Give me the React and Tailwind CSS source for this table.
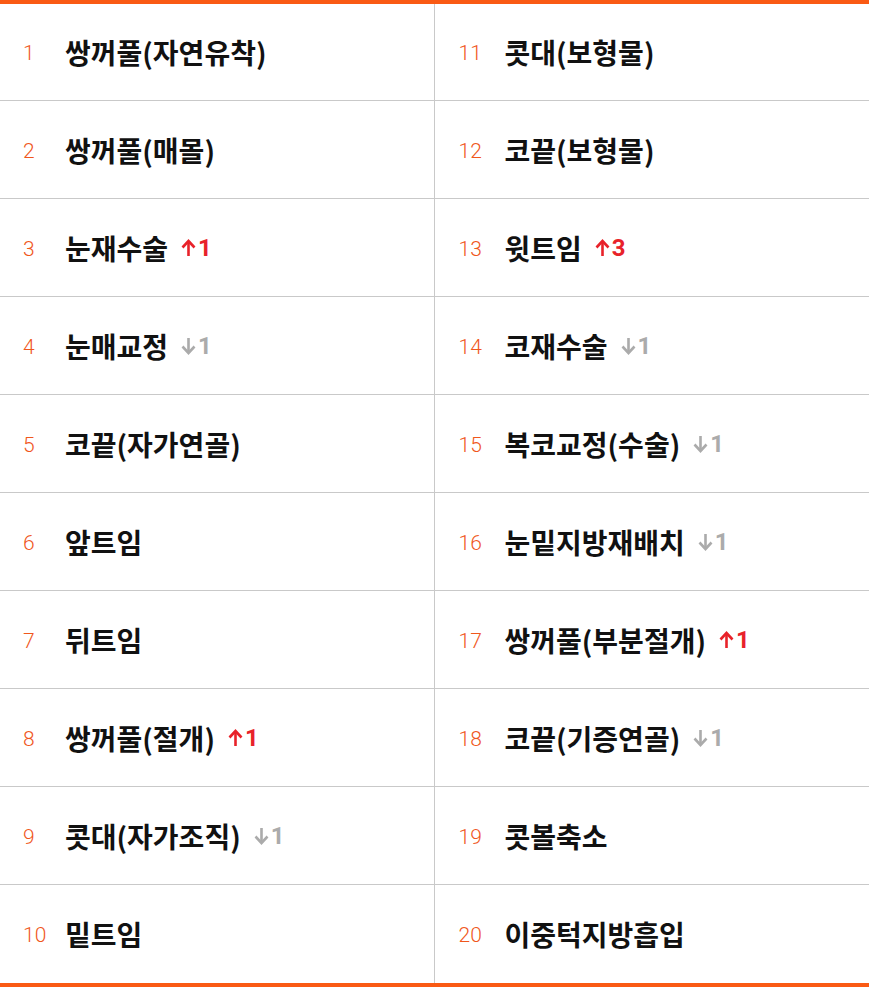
import React from "react";

const items = [
  { rank: 1, name: "쌍꺼풀(자연유착)" },
  { rank: 2, name: "쌍꺼풀(매몰)" },
  { rank: 3, name: "눈재수술", dir: "up", diff: 1 },
  { rank: 4, name: "눈매교정", dir: "down", diff: 1 },
  { rank: 5, name: "코끝(자가연골)" },
  { rank: 6, name: "앞트임" },
  { rank: 7, name: "뒤트임" },
  { rank: 8, name: "쌍꺼풀(절개)", dir: "up", diff: 1 },
  { rank: 9, name: "콧대(자가조직)", dir: "down", diff: 1 },
  { rank: 10, name: "밑트임" },
  { rank: 11, name: "콧대(보형물)" },
  { rank: 12, name: "코끝(보형물)" },
  { rank: 13, name: "윗트임", dir: "up", diff: 3 },
  { rank: 14, name: "코재수술", dir: "down", diff: 1 },
  { rank: 15, name: "복코교정(수술)", dir: "down", diff: 1 },
  { rank: 16, name: "눈밑지방재배치", dir: "down", diff: 1 },
  { rank: 17, name: "쌍꺼풀(부분절개)", dir: "up", diff: 1 },
  { rank: 18, name: "코끝(기증연골)", dir: "down", diff: 1 },
  { rank: 19, name: "콧볼축소" },
  { rank: 20, name: "이중턱지방흡입" },
];

const Arrow = ({ dir }) => (
  <svg width="15" height="18" viewBox="0 0 15 18" className="mr-[2px]">
    {dir === "up" ? (
      <>
        <path d="M7.5 17V4" stroke="currentColor" strokeWidth="2.6" />
        <path d="M1.5 8.5L7.5 2L13.5 8.5" fill="none" stroke="currentColor" strokeWidth="2.6" />
      </>
    ) : (
      <>
        <path d="M7.5 1V14" stroke="currentColor" strokeWidth="2.6" />
        <path d="M1.5 9.5L7.5 16L13.5 9.5" fill="none" stroke="currentColor" strokeWidth="2.6" />
      </>
    )}
  </svg>
);

const Row = ({ item, right, first, last }) => (
  <div
    className={
      "flex items-center " +
      (first ? "h-[97px] " : "h-[98px] ") +
      (last ? "" : "border-b border-[#c9c9c9] ") +
      (right ? "pl-[24px]" : "pl-[23px] border-r border-[#c9c9c9]")
    }
  >
    <span
      className={
        "pt-[4px] text-[21px] text-[#f0571c] " + (right ? "w-[46px]" : "w-[42px]")
      }
      style={{ fontFamily: "Roboto, sans-serif", fontWeight: 300 }}
    >
      {item.rank}
    </span>
    <span className="text-[28px] font-bold text-[#111]">{item.name}</span>
    {item.dir && (
      <span
        className={
          "ml-[13px] flex items-center text-[24px] font-bold " +
          (item.dir === "up" ? "text-[#e8222a]" : "text-[#ababab]")
        }
        style={{ fontFamily: "Roboto, sans-serif" }}
      >
        <Arrow dir={item.dir} />
        {item.diff}
      </span>
    )}
  </div>
);

export default function App() {
  const left = items.slice(0, 10);
  const right = items.slice(10);
  return (
    <div
      className="w-[869px] bg-white border-t-4 border-b-4 border-[#fa5a14]"
      style={{ fontFamily: '"Noto Sans CJK KR", "Noto Sans", sans-serif' }}
    >
      <div className="grid grid-cols-2">
        <div className="flex flex-col">
          {left.map((it, i) => (
            <Row key={it.rank} item={it} first={i === 0} last={i === 9} />
          ))}
        </div>
        <div className="flex flex-col">
          {right.map((it, i) => (
            <Row key={it.rank} item={it} right first={i === 0} last={i === 9} />
          ))}
        </div>
      </div>
    </div>
  );
}
